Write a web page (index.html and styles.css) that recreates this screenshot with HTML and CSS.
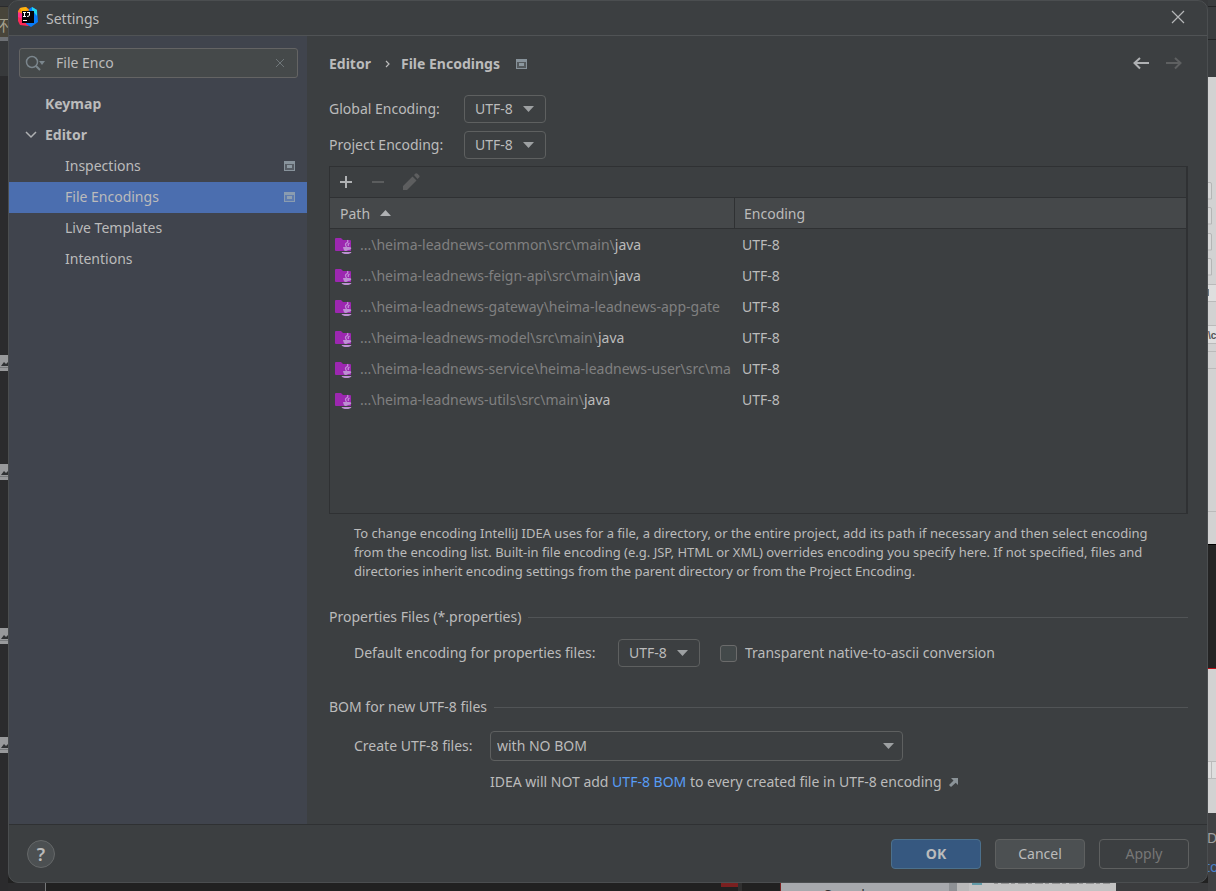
FILE: index.html
```html
<!DOCTYPE html>
<html lang="en">
<head>
<meta charset="utf-8">
<title>Settings</title>
<link rel="stylesheet" href="styles.css">
</head>
<body>
<svg class="defs" width="0" height="0" aria-hidden="true">
  <defs>
    <symbol id="project" viewBox="0 0 12 10"><path fill="#9aa7b0" fill-rule="evenodd" d="M0 0h11v10H0zM1 3v6h9V3z" opacity=".8"/><path fill="#9aa7b0" d="M1 3h9v6H1z" opacity=".25"/><path fill="#9aa7b0" d="M3 4h5v3H3z" opacity=".8"/></symbol>
    <symbol id="down" viewBox="0 0 12 6"><path fill="#9da0a2" d="M0 0h11L5.500 6z"/></symbol>
    <symbol id="folder" viewBox="0 0 18 18">
      <path fill="#9c27b0" d="M0 2q0-1 1-1h5l2 2h7q1 0 1 1v10H1q-1 0-1-1z"/>
      <path fill="none" stroke="#c08ad6" stroke-width="1.300" d="M12.500 3q1 2-1 3t0 4M14.500 6q-2 1-1 3"/>
      <path fill="#bd8fd2" d="M8 10h6q3 0 2 2-1 1-3 1-1 1-2.500 1T8.500 12zM6.500 15h10q-1 2-5 2t-5-2z"/>
    </symbol>
    <symbol id="thumb" viewBox="0 0 9 16"><path fill="#98999b" d="M0 0h9v16H0z"/><path fill="#303234" d="M1 11l3-4 2 2 2-2 1 1v3z"/><path fill="#77797b" d="M0 12h9v1H0z"/></symbol>
  </defs>
</svg>
<div class="desktop">
  <svg class="rail-left" width="8" height="891" viewBox="0 0 8 891" aria-hidden="true">
    <path fill="#2b2b2d" d="M0 0h8v891H0z"/><path fill="#37393b" d="M0 0h8v6H0zM0 41h8v35H0z"/>
    <path fill="#48453a" d="M0 7h8v30H0z"/><path fill="#6d7074" d="M0 37h8v4H0z"/>
    <text class="back-cjk" x="-6" y="31">环</text>
    <use href="#thumb" y="355" width="9" height="16"/><use href="#thumb" y="464" width="9" height="16"/>
    <use href="#thumb" y="628" width="9" height="16"/><use href="#thumb" y="737" width="9" height="16"/>
  </svg>
  <div class="middle">
    <section class="dialog" aria-label="Settings">
      <header class="titlebar">
        <svg width="20" height="20" viewBox="0 0 20 20" aria-hidden="true">
          <path fill="#fc801d" d="M0 4l2-3 6-1 4 3-4 7-8-1z"/><path fill="#fdb60d" d="M2 1l6-1 2 3-6 3z"/>
          <path fill="#fe2857" d="M0 9l6-3 8 10-4 3-8-1-2-4z"/><path fill="#ff318c" d="M0 5l5 2v5l-5-2z"/>
          <path fill="#087cfa" d="M11 2l3-2 5 3 1 12-7 5-5-3z"/><path fill="#21d7f0" d="M14 0l5 3v6l-5-6z"/>
          <path fill="#050408" d="M4 4h12v12H4z"/><path fill="#fff" d="M5 13h4v1H5z"/>
          <path fill="none" stroke="#fff" d="M5 5.500h3M6.500 5v4M5 9.500h3M9 5.500h3M11.500 5v3q0 1.500-2.500 1.500"/>
        </svg>
        <h1>Settings</h1>
        <button class="icon-btn" type="button" aria-label="Close"><svg width="14" height="14" viewBox="0 0 14 14"><path fill="none" stroke="#b5b7b8" stroke-width="1.200" d="M1 1l12 12M13 1L1 13"/></svg></button>
      </header>
      <div class="content">
        <nav class="sidebar" aria-label="Settings sections">
          <div class="search">
            <svg width="21" height="16" viewBox="0 0 21 16" aria-hidden="true"><circle cx="7" cy="7" r="5.500" fill="none" stroke="#7b868d" stroke-width="1.500"/><path stroke="#7b868d" stroke-width="2" d="M11 11l4 4"/><path fill="#7b868d" d="M14 6h6l-3 4z"/></svg>
            <input type="text" value="File Enco" aria-label="Search settings">
            <button class="icon-btn" type="button" aria-label="Clear"><svg width="10" height="10" viewBox="0 0 10 10"><path stroke="#6f7679" d="M1 1l8 8M9 1L1 9"/></svg></button>
          </div>
          <ul class="tree">
            <li><a class="group" href="#">Keymap</a></li>
            <li><a class="group" href="#"><svg class="chevron" width="12" height="8" viewBox="0 0 12 8"><path fill="none" stroke="#afb1b3" stroke-width="1.500" d="M1 1l5 5 5-5"/></svg>Editor</a></li>
            <li><a href="#">Inspections<svg width="12" height="10"><use href="#project"/></svg></a></li>
            <li><a class="selected" href="#" aria-current="page">File Encodings<svg width="12" height="10"><use href="#project"/></svg></a></li>
            <li><a href="#">Live Templates</a></li>
            <li><a href="#">Intentions</a></li>
          </ul>
        </nav>
        <main class="page">
          <div class="crumbs">
            <a href="#">Editor</a>
            <svg class="crumb-sep" width="5" height="8" viewBox="0 0 5 8"><path fill="none" stroke="#bbb" stroke-width="1.200" d="M1 1l3 3-3 3"/></svg>
            <h2>File Encodings</h2>
            <svg width="12" height="10"><use href="#project"/></svg>
            <div class="history">
              <button class="icon-btn" type="button" aria-label="Back"><svg width="17" height="14" viewBox="0 0 17 14"><path fill="none" stroke="#afb1b3" stroke-width="2" d="M16 6H2M7 1L1.500 6 7 11.500"/></svg></button>
              <button class="icon-btn" type="button" aria-label="Forward" disabled><svg width="17" height="14" viewBox="0 0 17 14"><path fill="none" stroke="#5e6061" stroke-width="2" d="M0 6h14M9 1l5.500 5L9 11.500"/></svg></button>
            </div>
          </div>
          <div class="encodings">
            <label for="global">Global Encoding:</label>
            <span class="combo"><select id="global"><option>UTF-8</option></select><svg width="12" height="6"><use href="#down"/></svg></span>
            <label for="project-enc">Project Encoding:</label>
            <span class="combo"><select id="project-enc"><option>UTF-8</option></select><svg width="12" height="6"><use href="#down"/></svg></span>
          </div>
          <div class="paths">
            <div class="toolbar">
              <button class="icon-btn" type="button" aria-label="Add"><svg width="14" height="14" viewBox="0 0 14 14"><path stroke="#afb1b3" stroke-width="2" d="M7 1v12M1 7h12"/></svg></button>
              <button class="icon-btn" type="button" aria-label="Remove" disabled><svg width="14" height="14" viewBox="0 0 14 14"><path stroke="#5b5d5e" stroke-width="2" d="M1 7h12"/></svg></button>
              <button class="icon-btn" type="button" aria-label="Edit" disabled><svg width="18" height="18" viewBox="0 0 18 18"><path fill="#5d5e5f" d="M0 13L9.500 3.500l4 4L4 17H0zM11 2l1.500-1.500q1-.7 2 .3L16 2.300q1 1 .3 2L14.500 6z"/></svg></button>
            </div>
            <table>
              <colgroup><col class="col-path"><col></colgroup>
              <thead><tr><th>Path <svg width="11" height="6" viewBox="0 0 11 6"><path fill="#afb1b3" d="M0 6h11L5.500 0z"/></svg></th><th>Encoding</th></tr></thead>
              <tbody>
                <tr><td><svg width="18" height="18"><use href="#folder"/></svg>...\heima-leadnews-common\src\main\<b>java</b></td><td>UTF-8</td></tr>
                <tr><td><svg width="18" height="18"><use href="#folder"/></svg>...\heima-leadnews-feign-api\src\main\<b>java</b></td><td>UTF-8</td></tr>
                <tr><td><svg width="18" height="18"><use href="#folder"/></svg>...\heima-leadnews-gateway\heima-leadnews-app-gate</td><td>UTF-8</td></tr>
                <tr><td><svg width="18" height="18"><use href="#folder"/></svg>...\heima-leadnews-model\src\main\<b>java</b></td><td>UTF-8</td></tr>
                <tr><td><svg width="18" height="18"><use href="#folder"/></svg>...\heima-leadnews-service\heima-leadnews-user\src\ma</td><td>UTF-8</td></tr>
                <tr><td><svg width="18" height="18"><use href="#folder"/></svg>...\heima-leadnews-utils\src\main\<b>java</b></td><td>UTF-8</td></tr>
              </tbody>
            </table>
          </div>
          <p class="note">To change encoding IntelliJ IDEA uses for a file, a directory, or the entire project, add its path if necessary and then select encoding<br>from the encoding list. Built-in file encoding (e.g. JSP, HTML or XML) overrides encoding you specify here. If not specified, files and<br>directories inherit encoding settings from the parent directory or from the Project Encoding.</p>
          <h3>Properties Files (*.properties)</h3>
          <div class="row">
            <label class="row-label" for="props">Default encoding for properties files:</label>
            <span class="combo"><select id="props"><option>UTF-8</option></select><svg width="12" height="6"><use href="#down"/></svg></span>
            <label class="check"><input type="checkbox">Transparent native-to-ascii conversion</label>
          </div>
          <h3>BOM for new UTF-8 files</h3>
          <div class="bom">
            <label for="bom">Create UTF-8 files:</label>
            <span class="combo wide"><select id="bom"><option>with NO BOM</option></select><svg width="12" height="6"><use href="#down"/></svg></span>
            <p class="hint">IDEA will NOT add <a href="#">UTF-8 BOM</a> to every created file in UTF-8 encoding <svg width="9" height="9" viewBox="0 0 9 9"><path fill="#8b9398" d="M2 0h7v7L6.700 4.700 2 9 0 7l4.500-4.500z"/></svg></p>
          </div>
        </main>
      </div>
      <footer class="footer">
        <button class="help" type="button" aria-label="Help">?</button>
        <button class="btn primary" type="button">OK</button>
        <button class="btn" type="button">Cancel</button>
        <button class="btn" type="button" disabled>Apply</button>
      </footer>
    </section>
    <svg class="rail-bottom" height="8" aria-hidden="true">
      <path fill="#2c2c2e" d="M0 0h37v8H0z"/><path fill="#77797b" d="M37 0h1v8h-1z"/>
      <path fill="#7a2020" d="M713 0h17v4h-17zM772 0h1v8h-1z"/>
      <path fill="#303030" d="M730 0h4v8h-4z"/><path fill="#a7a9ad" d="M773 0h176v8H773z"/><path fill="#8e9195" d="M941 0h8v8h-8z"/>
      <path fill="#b9b9b9" d="M949 0h12v8h-12z"/><path fill="#c2c2c2" d="M961 0h147v8H961z"/><path fill="#629ba8" d="M964 0h10v2h-10z"/>
      <path fill="#3b3c3e" d="M1108 0h400v8h-400z"/><text class="back-small" x="816" y="17">Sample</text>
      <path stroke="#949494" stroke-dasharray="4 3 8 2" d="M986 .5h116"/>
    </svg>
  </div>
  <svg class="rail-right" width="8" height="891" viewBox="0 0 8 891" aria-hidden="true">
    <path fill="#3a3d3f" d="M0 0h8v77H0z"/><path stroke="#242526" d="M0 6.500h8M0 39.500h8"/><path fill="#d2d2d2" d="M0 77h8v467H0zM0 669h8v144H0z"/>
    <path fill="#dedede" d="M0 284h8v17H0zM0 325h8v18H0zM0 761h8v17H0z"/>
    <path stroke="#bababa" d="M0 284.500h8M0 301.500h8M0 325.500h8M0 343.500h8M0 351.500h8M0 368.500h8M0 511.500h8M0 761.500h8M0 778.500h8M3.500 762v16"/>
    <path fill="#d8d8d8" stroke="#b5b5b5" d="M-4 182.500h6q1.500 0 1.500 1.500v15H-4zM-4 207.500h6q1.500 0 1.500 1.500v15H-4zM-4 233.500h6q1.500 0 1.500 1.500v15H-4zM-4 258.500h6q1.500 0 1.500 1.500v15H-4z"/>
    <path fill="#657685" d="M0 289h1v7H0z"/>
    <path fill="#000" d="M0 544h8v1H0z"/><path fill="#242424" d="M0 545h8v123H0z"/><path fill="#c01018" d="M0 668h8v1H0z"/><path fill="#404143" d="M0 813h8v78H0z"/>
    <text class="back-mono" x="0" y="339">\c</text><text class="back-text" x="-1" y="843">D</text><text class="back-link" x="-3" y="872">to</text>
  </svg>
</div>
</body>
</html>
```
FILE: styles.css
```css
* { box-sizing: border-box; }
body { margin: 0; background: #2a2b2c; color: #bbbbbb; font: 14px/20px "Noto Sans", "Open Sans", sans-serif; }
h1, h2, h3, p, ul { margin: 0; padding: 0; }
h1, h3 { font-size: 14px; font-weight: 400; }
h2 { font-size: 14px; font-weight: 700; }
a { color: inherit; text-decoration: none; }
svg { flex: none; display: block; }
.defs { position: absolute; }
button, input, select { font: inherit; color: inherit; }

.desktop { display: flex; min-height: 100vh; }
.middle { flex: 1; min-width: 0; display: flex; flex-direction: column; background: linear-gradient(#37393b 50%, #212121 50%); }
.rail-bottom { width: 100%; }
.back-cjk { font: 15px "Noto Sans CJK SC", sans-serif; fill: #a5a18f; }
.back-text { font: 14px "Noto Sans", sans-serif; fill: #a0a0a0; }
.back-link { font: 14px "Noto Sans", sans-serif; fill: #4a7fc8; }
.back-mono { font: bold 10px "Liberation Sans", sans-serif; fill: #555; }
.back-small { font: 14px "Noto Sans", sans-serif; fill: #333; }

.dialog { flex: 1; display: flex; flex-direction: column; background: #3c3f41; border: 1px solid #4b4e50; border-radius: 10px; overflow: hidden; }
.titlebar { display: flex; align-items: center; gap: 8px; height: 35px; padding: 0 22px 2px 9px; border-bottom: 1px solid #505355; }
.titlebar h1 { padding-top: 3px; }
.titlebar .icon-btn { margin-left: auto; }
.icon-btn { display: flex; align-items: center; justify-content: center; padding: 0; border: 0; background: none; }
.content { flex: 1; display: flex; }

.sidebar { width: 298px; background: #40444d; }
.search { display: flex; align-items: center; gap: 10px; height: 30px; margin: 12px 9px 11px 10px; padding: 0 12px 0 5px; background: #45494a; border: 1px solid #646464; border-radius: 3px; }
.search input { flex: 1; min-width: 0; padding: 0; border: 0; outline: 0; background: none; }
.tree { list-style: none; }
.tree a { display: flex; align-items: center; justify-content: space-between; height: 31px; padding: 0 11px 2px 56px; }
.tree .group { justify-content: flex-start; gap: 8px; padding-left: 36px; font-weight: 700; }
.chevron { margin-left: -20px; }
.tree .selected { background: #4b6eaf; }

.page { flex: 1; min-width: 0; padding: 18px 19px 16px 22px; }
.crumbs { display: flex; align-items: center; gap: 16px; height: 20px; font-weight: 700; }
.crumb-sep { margin: 0 -5px; }
.crumbs a { margin-right: 3px; }
.history { display: flex; gap: 16px; margin: 0 5px 0 auto; }
.encodings { display: grid; grid-template-columns: 119px max-content; gap: 8px 16px; align-items: center; margin: 21px 0 7px; }
.combo { display: inline-grid; align-items: center; width: 82px; height: 28px; }
.combo > * { grid-area: 1 / 1; }
.combo svg { justify-self: end; margin-right: 11px; pointer-events: none; }
.combo select { appearance: none; width: 100%; height: 100%; padding: 0 0 0 10px; border: 1px solid #5e6060; border-radius: 4px; background: #3c3f41; }
.combo.wide { width: 413px; height: 30px; }
.combo.wide select { padding-left: 6px; }
.combo.wide svg { margin-right: 8px; }

.paths { min-height: 348px; border: 1px solid #2f3133; border-right-width: 2px; }
.toolbar { display: flex; align-items: center; gap: 18px; height: 30px; padding-left: 9px; }
table { width: 100%; table-layout: fixed; border-collapse: separate; border-spacing: 0; }
.col-path { width: 405px; }
th { height: 32px; padding: 2px 9px 0; text-align: left; font-weight: 400; background: #45484a; border: solid #2f3133; border-width: 1px 0; }
th:first-child { padding-left: 10px; border-right-width: 1px; }
th svg { display: inline-block; margin-left: 6px; vertical-align: 3px; }
td { height: 31px; padding: 0 7px; white-space: nowrap; overflow: hidden; }
td:first-child { padding: 0 0 0 5px; color: #808080; border-right: 1px solid transparent; }
td svg { display: inline-block; margin-right: 7px; vertical-align: -5px; }
td b { font-weight: 400; color: #bbbbbb; }

.note { margin: 10px 0 26px 25px; font-size: 13px; line-height: 19px; white-space: nowrap; }
h3 { display: flex; align-items: center; gap: 7px; }
h3::after { content: ""; flex: 1; height: 1px; background: #515456; }
.row { display: flex; align-items: center; margin: 12px 0 30px 25px; }
.row-label { min-width: 248px; }
.row .combo { margin: 0 20px 0 16px; }
.check { display: flex; align-items: center; gap: 8px; }
.check input { appearance: none; width: 17px; height: 17px; margin: 0; background: #43494a; border: 1px solid #6b6b6b; border-radius: 3px; }
.bom { display: grid; grid-template-columns: 120px minmax(0, max-content); gap: 11px 16px; align-items: center; margin: 14px 0 0 25px; }
.hint { grid-column: 2; display: flex; align-items: center; white-space: pre; }
.hint a { color: #589df6; }
.hint svg { margin-left: 4px; }

.footer { display: flex; align-items: center; gap: 14px; height: 58px; padding: 0 18px; border-top: 1px solid #2f3133; }
.help { width: 28px; height: 28px; margin-right: auto; padding: 0; border: 1px solid #656869; border-radius: 50%; background: #4c5052; font-size: 18px; font-weight: 600; line-height: 24px; }
.btn { width: 90px; height: 30px; padding: 0; border: 1px solid #5e6060; border-radius: 4px; background: #4c5052; }
.primary { background: #365880; border-color: #4c708c; font-weight: 700; }
.btn:disabled { background: none; color: #777777; }
```
